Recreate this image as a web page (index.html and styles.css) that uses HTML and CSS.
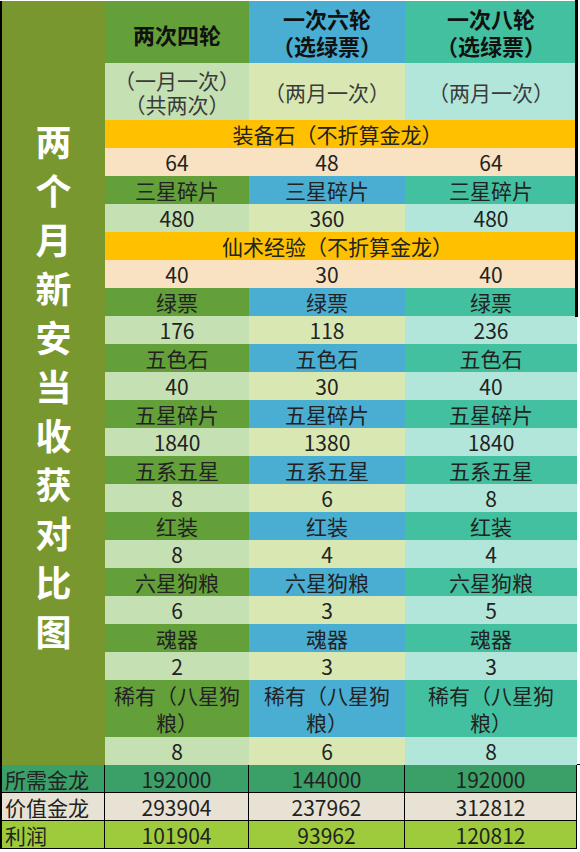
FILE: index.html
```html
<!DOCTYPE html>
<html lang="zh">
<head>
<meta charset="utf-8">
<title>两个月新安当收获对比图</title>
<link rel="stylesheet" href="styles.css">
</head>
<body>
<div class="sheet">
  <div class="top">
    <div class="side"><div class="side-text">两个月新安当收获对比图</div></div>

    <div class="cell h1">两次四轮</div>
    <div class="cell h2"><span class="hl">一次六轮</span><span class="hl">（选绿票）</span></div>
    <div class="cell h3"><span class="hl">一次八轮</span><span class="hl">（选绿票）</span></div>

    <div class="cell s1 sub"><span class="sl">（一月一次）</span><span class="sl">（共两次）</span></div>
    <div class="cell s2 sub">（两月一次）</div>
    <div class="cell s3 sub">（两月一次）</div>

    <div class="cell orange span3">装备石（不折算金龙）</div>
    <div class="cell beige">64</div><div class="cell beige">48</div><div class="cell beige">64</div>

    <div class="cell n1">三星碎片</div><div class="cell n2">三星碎片</div><div class="cell n3">三星碎片</div>
    <div class="cell s1">480</div><div class="cell s2">360</div><div class="cell s3">480</div>

    <div class="cell orange span3">仙术经验（不折算金龙）</div>
    <div class="cell beige">40</div><div class="cell beige">30</div><div class="cell beige">40</div>

    <div class="cell n1">绿票</div><div class="cell n2">绿票</div><div class="cell n3">绿票</div>
    <div class="cell s1">176</div><div class="cell s2">118</div><div class="cell s3">236</div>

    <div class="cell n1">五色石</div><div class="cell n2">五色石</div><div class="cell n3">五色石</div>
    <div class="cell s1">40</div><div class="cell s2">30</div><div class="cell s3">40</div>

    <div class="cell n1">五星碎片</div><div class="cell n2">五星碎片</div><div class="cell n3">五星碎片</div>
    <div class="cell s1">1840</div><div class="cell s2">1380</div><div class="cell s3">1840</div>

    <div class="cell n1">五系五星</div><div class="cell n2">五系五星</div><div class="cell n3">五系五星</div>
    <div class="cell s1">8</div><div class="cell s2">6</div><div class="cell s3">8</div>

    <div class="cell n1">红装</div><div class="cell n2">红装</div><div class="cell n3">红装</div>
    <div class="cell s1">8</div><div class="cell s2">4</div><div class="cell s3">4</div>

    <div class="cell n1">六星狗粮</div><div class="cell n2">六星狗粮</div><div class="cell n3">六星狗粮</div>
    <div class="cell s1">6</div><div class="cell s2">3</div><div class="cell s3">5</div>

    <div class="cell n1">魂器</div><div class="cell n2">魂器</div><div class="cell n3">魂器</div>
    <div class="cell s1">2</div><div class="cell s2">3</div><div class="cell s3">3</div>

    <div class="cell n1 wrap"><span class="wl">稀有（八星狗</span><span class="wl">粮）</span></div>
    <div class="cell n2 wrap"><span class="wl">稀有（八星狗</span><span class="wl">粮）</span></div>
    <div class="cell n3 wrap"><span class="wl">稀有（八星狗</span><span class="wl">粮）</span></div>
    <div class="cell s1">8</div><div class="cell s2">6</div><div class="cell s3">8</div>
  </div>

  <div class="bottom">
    <div class="bc label r-need">所需金龙</div><div class="bc r-need">192000</div><div class="bc r-need">144000</div><div class="bc r-need">192000</div>
    <div class="bc label r-value">价值金龙</div><div class="bc r-value">293904</div><div class="bc r-value">237962</div><div class="bc r-value">312812</div>
    <div class="bc label r-profit">利润</div><div class="bc r-profit">101904</div><div class="bc r-profit">93962</div><div class="bc r-profit">120812</div>
  </div>
</div>
</body>
</html>
```

FILE: styles.css
```css
* { box-sizing: border-box; }

html, body {
  margin: 0;
  padding: 0;
  background: #ffffff;
}

body {
  font-family: "Noto Sans CJK SC", "Noto Sans", sans-serif;
  color: #222222;
  padding-top: 1px;
}

.sheet {
  width: 580px;
}

.top {
  position: relative;
  display: grid;
  grid-template-columns: 105px 144px 156px 172px;
  grid-template-rows: 62px 57px repeat(20, 28px) 57px 28px;
}

.top::after {
  content: "";
  position: absolute;
  left: 575px;
  top: -1px;
  width: 3px;
  height: 317px;
  background: #000000;
}

.side {
  grid-column: 1;
  grid-row: 1 / span 24;
  background: #78982f;
  border-left: 2px solid #000000;
  display: flex;
  align-items: center;
  justify-content: center;
}

.side-text {
  width: 36px;
  font-size: 36px;
  line-height: 49px;
  font-weight: 700;
  color: #ffffff;
  text-align: center;
  margin-top: 4px;
}

.cell {
  display: flex;
  flex-direction: column;
  align-items: center;
  justify-content: center;
  text-align: center;
  font-size: 21px;
  line-height: 26px;
  padding: 0 3px;
  white-space: nowrap;
}

.hl {
  display: block;
  height: 27px;
  line-height: 27px;
}

.sl {
  display: block;
  height: 24px;
  line-height: 24px;
}

.wl {
  display: block;
  height: 27px;
  line-height: 27px;
}

.h1, .h2, .h3 {
  font-weight: 700;
  font-size: 22px;
  color: #111111;
}

.h1 { background: #63a03a; padding-top: 4px; }
.h2 { background: #4aadd2; }
.h3 { background: #43c0a0; }

.sub {
  color: #3a3a3a;
}

.n1 { background: #63a03a; }
.n2 { background: #4aadd2; }
.n3 { background: #43c0a0; }

.s1 { background: #c5e0b3; }
.s2 { background: #d9e8b2; }
.s3 { background: #b3e6da; }

.orange {
  background: #ffc000;
  padding-right: 10px;
}

.span3 { grid-column: 2 / span 3; }

.beige { background: #f9e2c2; }

.bottom {
  display: grid;
  grid-template-columns: 105px 144px 156px 172px;
  grid-template-rows: repeat(3, 28px);
  border-top: 1px solid #000000;
  margin-top: -1px;
}

.bc {
  display: flex;
  align-items: center;
  justify-content: center;
  font-size: 21px;
  line-height: 26px;
  border-right: 1px solid #000000;
  border-bottom: 1px solid #000000;
  color: #222222;
}

.label {
  justify-content: flex-start;
  padding-left: 3px;
  border-left: 2px solid #000000;
}

.r-need { background: #3b9f68; }
.r-value { background: #e7e2d3; }
.r-profit { background: #9ecb3b; }
```
